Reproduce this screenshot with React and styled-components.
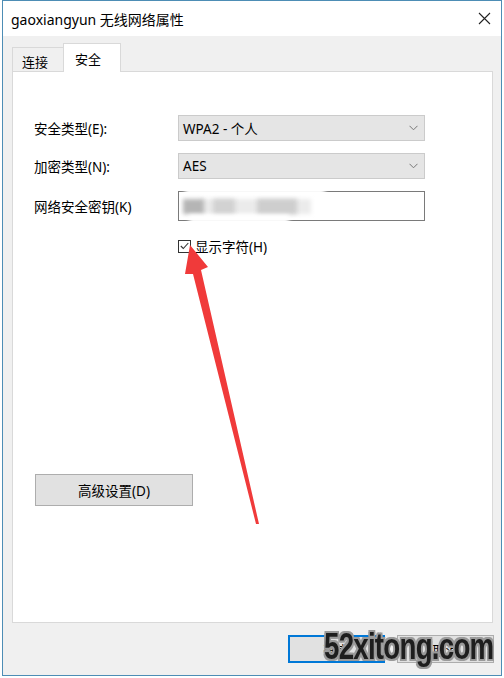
import React from "react";
import styled, { createGlobalStyle } from "styled-components";

const Global = createGlobalStyle`
  html, body {
    margin: 0;
    padding: 0;
    background: #ffffff;
  }
  body {
    font-family: "Noto Sans", "Noto Sans CJK SC", sans-serif;
    font-size: 13px;
    color: #000;
  }
`;

const Page = styled.div`
  width: 504px;
  height: 678px;
  padding: 0 2px;
  box-sizing: border-box;
  position: relative;
  overflow: hidden;
`;

const Window = styled.div`
  width: 500px;
  height: 676px;
  box-sizing: border-box;
  border: 1px solid #4d8db5;
  background: #f0f0f0;
  display: flex;
  flex-direction: column;
`;

const TitleBar = styled.div`
  height: 35px;
  flex: none;
  background: #ffffff;
  display: flex;
  align-items: center;
  justify-content: space-between;
  padding: 0 10px 0 8px;
  font-size: 14px;
`;

const Close = styled.svg`
  width: 13px;
  height: 13px;
`;

const Body = styled.div`
  flex: 1;
  display: flex;
  flex-direction: column;
  padding: 8px 8px 0 9px;
`;

const Tabs = styled.div`
  display: flex;
  align-items: flex-end;
  height: 28px;
  margin-bottom: -1px;
  position: relative;
  z-index: 1;
`;

const Tab = styled.div`
  box-sizing: border-box;
  height: ${(p) => (p.$active ? "29px" : "25px")};
  padding: 0 ${(p) => (p.$active ? "11px" : "9px")};
  margin-left: ${(p) => (p.$active ? "-1px" : "0")};
  background: ${(p) => (p.$active ? "#ffffff" : "#f0f0f0")};
  border: 1px solid #d9d9d9;
  border-bottom: ${(p) => (p.$active ? "none" : "1px solid #d9d9d9")};
  display: flex;
  align-items: center;
  padding-top: ${(p) => (p.$active ? "0" : "4px")};
  font-size: 13px;
  width: ${(p) => (p.$active ? "58px" : "52px")};
`;

const Panel = styled.div`
  height: 552px;
  box-sizing: border-box;
  background: #ffffff;
  border: 1px solid #d9d9d9;
  padding: 43px 0 0 21px;
  display: flex;
  flex-direction: column;
`;

const Form = styled.div`
  display: grid;
  grid-template-columns: 144px 247px;
  grid-template-rows: 26px 26px 30px;
  row-gap: 12px;
  align-items: center;
`;

const Label = styled.div`
  font-size: 13.5px;
`;

const Select = styled.div`
  height: 26px;
  box-sizing: border-box;
  background: #e5e5e5;
  border: 1px solid #cbcbcb;
  display: flex;
  align-items: center;
  justify-content: space-between;
  padding: 0 6px 0 4px;
  font-size: 13.5px;
`;

const Chevron = styled.svg`
  width: 9px;
  height: 6px;
`;

const Input = styled.div`
  height: 30px;
  box-sizing: border-box;
  border: 1px solid #7a7a7a;
  background: #fff;
  position: relative;
  overflow: visible;
`;

const Blob = styled.span`
  position: absolute;
  top: ${(p) => p.$top}px;
  left: ${(p) => p.$left}px;
  width: ${(p) => p.$w}px;
  height: ${(p) => p.$h}px;
  background: ${(p) => p.$c};
  filter: blur(${(p) => p.$blur}px);
`;

const CheckRow = styled.label`
  display: flex;
  align-items: center;
  gap: 4px;
  margin: 18px 0 0 144px;
  font-size: 13.5px;
  height: 14px;
`;

const Box = styled.span`
  width: 13px;
  height: 13px;
  box-sizing: border-box;
  border: 1px solid #333;
  background: #fff;
  display: flex;
  align-items: center;
  justify-content: center;
`;

const AdvButton = styled.div`
  margin: 221px 0 0 1px;
  width: 158px;
  height: 32px;
  box-sizing: border-box;
  background: #e1e1e1;
  border: 1px solid #adadad;
  display: flex;
  align-items: center;
  justify-content: center;
  font-size: 13.5px;
`;

const Footer = styled.div`
  display: flex;
  justify-content: flex-end;
  gap: 12px;
  padding: 12px 0 0 0;
  margin-right: -1px;
`;

const DlgButton = styled.div`
  width: 97px;
  height: 28px;
  box-sizing: border-box;
  background: #e1e1e1;
  border: ${(p) => (p.$primary ? "2px solid #0078d7" : "1px solid #adadad")};
  display: flex;
  align-items: center;
  justify-content: center;
  font-size: 13px;
`;

const Watermark = styled.div`
  position: absolute;
  left: 324px;
  top: 626px;
  font-family: "Liberation Sans", Arial, sans-serif;
  font-weight: 700;
  font-size: 36px;
  color: #1e1e1e;
  letter-spacing: -1px;
  transform: scaleX(0.77);
  transform-origin: left center;
  text-shadow: -2px -2px 0 #9a9a9a, 2px -2px 0 #9a9a9a, -2px 2px 0 #9a9a9a,
    2px 2px 0 #9a9a9a, 0 2px 0 #9a9a9a, 0 -2px 0 #9a9a9a, 2px 0 0 #9a9a9a,
    -2px 0 0 #9a9a9a;
`;

const Arrow = styled.svg`
  position: absolute;
  left: 0;
  top: 0;
  width: 504px;
  height: 678px;
  pointer-events: none;
`;

export default function App() {
  return (
    <Page>
      <Global />
      <Window>
        <TitleBar>
          <span>gaoxiangyun 无线网络属性</span>
          <Close viewBox="0 0 13 13">
            <path d="M1 1 L12 12 M12 1 L1 12" stroke="#222" strokeWidth="1.1" fill="none" />
          </Close>
        </TitleBar>
        <Body>
          <Tabs>
            <Tab>连接</Tab>
            <Tab $active>安全</Tab>
          </Tabs>
          <Panel>
            <Form>
              <Label>安全类型(E):</Label>
              <Select>
                <span>WPA2 - 个人</span>
                <Chevron viewBox="0 0 9 6">
                  <path d="M0.5 0.8 L4.5 4.8 L8.5 0.8" stroke="#777" strokeWidth="1" fill="none" />
                </Chevron>
              </Select>
              <Label>加密类型(N):</Label>
              <Select>
                <span>AES</span>
                <Chevron viewBox="0 0 9 6">
                  <path d="M0.5 0.8 L4.5 4.8 L8.5 0.8" stroke="#777" strokeWidth="1" fill="none" />
                </Chevron>
              </Select>
              <Label>网络安全密钥(K)</Label>
              <Input>
                <Blob $top={-4} $left={6} $w={140} $h={9} $c="#fff" $blur={2} />
                <Blob $top={7} $left={22} $w={110} $h={15} $c="#ebebeb" $blur={2} />
                <Blob $top={7} $left={4} $w={21} $h={15} $c="#b5b5b5" $blur={2} />
                <Blob $top={7} $left={34} $w={22} $h={15} $c="#d2d2d2" $blur={2} />
                <Blob $top={7} $left={78} $w={40} $h={15} $c="#cecece" $blur={2} />
                <Blob $top={23} $left={10} $w={100} $h={9} $c="#fff" $blur={2} />
              </Input>
            </Form>
            <CheckRow>
              <Box>
                <svg width="9" height="8" viewBox="0 0 9 8">
                  <path d="M0.8 4 L3.3 6.5 L8.3 1" stroke="#333" strokeWidth="1.1" fill="none" />
                </svg>
              </Box>
              显示字符(H)
            </CheckRow>
            <AdvButton>高级设置(D)</AdvButton>
          </Panel>
          <Footer>
            <DlgButton $primary>确定</DlgButton>
            <DlgButton>取消</DlgButton>
          </Footer>
        </Body>
      </Window>
      <Arrow viewBox="0 0 504 678">
        <polygon
          points="190,245 208,267 201,270 259,524 256,524 193,274 185,274"
          fill="#f03a3a"
        />
      </Arrow>
      <Watermark>52xitong.com</Watermark>
    </Page>
  );
}
